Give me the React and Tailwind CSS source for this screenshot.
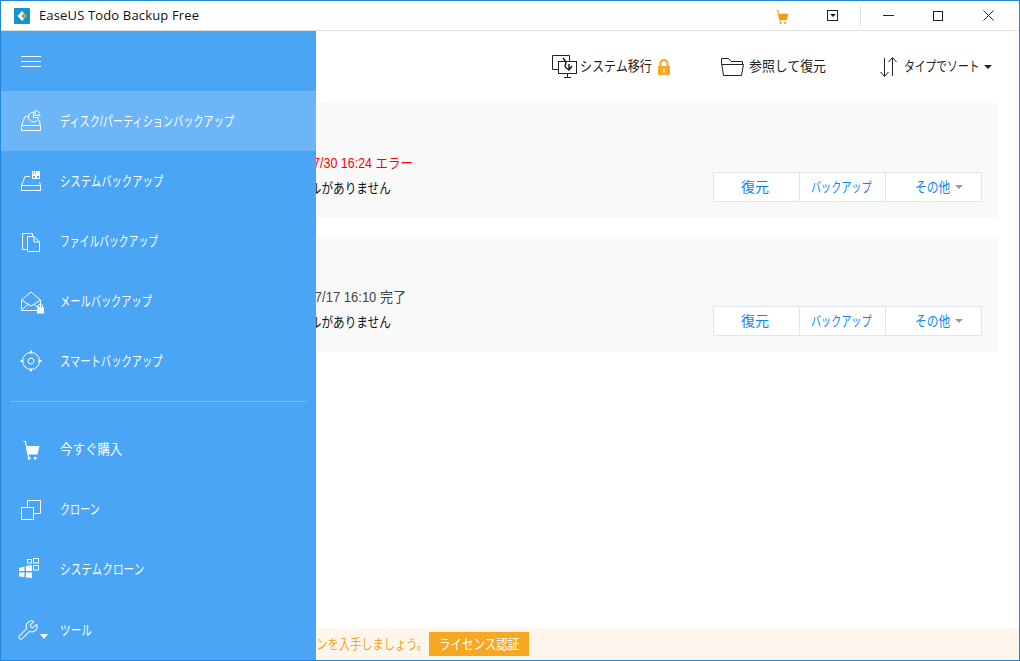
import { Wrench } from "lucide-react";

// narrow the Japanese text, the reference font is much more condensed than Noto
function Txt({ box, squeeze, children }) {
  return (
    <span className={`inline-block whitespace-nowrap ${box}`}>
      <span className={`inline-block origin-left ${squeeze}`}>{children}</span>
    </span>
  );
}

function DiskIcon() {
  return (
    <svg width="24" height="24" viewBox="0 0 24 24" fill="none" stroke="white" strokeWidth="1">
      <rect x="2.5" y="16.5" width="19" height="5" />
      <path d="M2.5 16.5 L6 7.5 H10 M21.5 16.5 L20 11" />
      <path d="M14.5 3 A5 5 0 1 0 19.5 8.5 H14.5 Z" />
      <path d="M16 1.5 A5 5 0 0 1 21 6.5 H16 Z" />
    </svg>
  );
}

function SystemIcon() {
  return (
    <svg width="24" height="24" viewBox="0 0 24 24" fill="none" stroke="white" strokeWidth="1">
      <rect x="2.5" y="16.5" width="19" height="5" />
      <path d="M2.5 16.5 L6 7.5 H11 M21.5 16.5 L20.5 13" />
      <rect x="17" y="2.5" width="3.5" height="3" fill="white" />
      <rect x="13.5" y="6.5" width="3" height="3" />
      <rect x="17.5" y="6.5" width="3" height="3" />
      <rect x="13.5" y="2.5" width="2" height="3" />
    </svg>
  );
}

function FileIcon() {
  return (
    <svg width="24" height="24" viewBox="0 0 24 24" fill="none" stroke="white" strokeWidth="1">
      <path d="M8.5 20.5 H3.5 V4.5 H13.5 V7.5" />
      <path d="M8.5 7.5 H15 L20.5 13 V22.5 H8.5 Z M15 7.5 V13 H20.5" />
    </svg>
  );
}

function MailIcon() {
  return (
    <svg width="24" height="24" viewBox="0 0 24 24" fill="none" stroke="white" strokeWidth="1" className="overflow-visible">
      <path d="M2.5 11 L12 3 L21.5 11 V21.5 H2.5 Z" />
      <path d="M2.5 11 L12 17 L21.5 11 M2.5 21 L9 15.5 M21 19 L15 15.5" />
      <rect x="18" y="18.5" width="7" height="6" fill="white" stroke="none" />
      <path d="M19.5 18.5 V17 A2 2 0 0 1 23.5 17 V18.5" />
    </svg>
  );
}

function SmartIcon() {
  return (
    <svg width="24" height="24" viewBox="0 0 24 24" fill="none" stroke="white" strokeWidth="1">
      <circle cx="12" cy="12" r="8.5" />
      <circle cx="12" cy="12" r="3" />
      <path d="M12 1.5 V4.5 M12 19.5 V22.5 M1.5 12 H4.5 M19.5 12 H22.5" strokeWidth="2" />
    </svg>
  );
}

function CartIcon({ color, size = 24 }) {
  return (
    <svg width={size} height={size} viewBox="0 0 24 24" fill={color} stroke="none">
      <path d="M3 4 L6 5 L9 20 H10 L7 4 Z" />
      <path d="M7 9 H20.5 L18.5 17.5 H8.5 Z" />
      <rect x="9" y="20" width="2.5" height="2.5" />
      <rect x="15" y="20" width="2.5" height="2.5" />
    </svg>
  );
}

function CloneIcon() {
  return (
    <svg width="24" height="24" viewBox="0 0 24 24" fill="none" stroke="white" strokeWidth="1">
      <rect x="2.5" y="10.5" width="12" height="12" />
      <path d="M8.5 10 V3.5 H21.5 V16.5 H15" />
    </svg>
  );
}

function SysCloneIcon() {
  return (
    <svg width="24" height="24" viewBox="0 0 24 24" fill="white" stroke="none">
      <path d="M0 11 L5.5 9.5 V14 H0 Z M7 9 L13 8 V14 H7 Z M0 15.5 H5.5 V20 L0 19.5 Z M7 15.5 H13 V21 L7 20.5 Z" />
      <g fill="none" stroke="white" strokeWidth="1">
        <rect x="8.5" y="2.5" width="4" height="3.5" />
        <rect x="14.5" y="1.5" width="5" height="4.5" />
        <rect x="14.5" y="8.5" width="5" height="4.5" />
      </g>
    </svg>
  );
}

const menu = [
  { icon: <DiskIcon />, label: "ディスク/パーティションバックアップ", box: "w-[175px]", squeeze: "scale-x-[0.725]", active: true },
  { icon: <SystemIcon />, label: "システムバックアップ", box: "w-[104px]", squeeze: "scale-x-[0.74]" },
  { icon: <FileIcon />, label: "ファイルバックアップ", box: "w-[98px]", squeeze: "scale-x-[0.7]" },
  { icon: <MailIcon />, label: "メールバックアップ", box: "w-[92px]", squeeze: "scale-x-[0.73]" },
  { icon: <SmartIcon />, label: "スマートバックアップ", box: "w-[103px]", squeeze: "scale-x-[0.735]" },
];

const menu2 = [
  { icon: <CartIcon color="white" />, label: "今すぐ購入", box: "w-[62px]", squeeze: "scale-x-[0.89]" },
  { icon: <CloneIcon />, label: "クローン", box: "w-[40px]", squeeze: "scale-x-[0.72]" },
  { icon: <SysCloneIcon />, label: "システムクローン", box: "w-[85px]", squeeze: "scale-x-[0.76]" },
];

function SideRow({ item }) {
  return (
    <div className={`flex h-[60px] items-center pl-[18px] text-white ${item.active ? "bg-[#6cb5f7]" : ""}`}>
      <div className="w-[24px] shrink-0">{item.icon}</div>
      <div className="ml-[17px] pt-px">
        <Txt box={item.box} squeeze={item.squeeze}>{item.label}</Txt>
      </div>
    </div>
  );
}

function Sidebar() {
  return (
    <aside className="absolute inset-y-0 left-0 z-10 flex w-[315px] flex-col bg-[#4aa5f5]">
      <div className="flex h-[60px] shrink-0 flex-col justify-center gap-[4px] pl-[20px]">
        <div className="h-px w-[20px] bg-white" />
        <div className="h-px w-[20px] bg-white" />
        <div className="h-px w-[20px] bg-white" />
      </div>
      {menu.map((m) => (
        <SideRow key={m.label} item={m} />
      ))}
      <div className="mx-[10px] mt-[10px] mb-[17px] h-px bg-[#7dbdf8]" />
      {menu2.map((m) => (
        <SideRow key={m.label} item={m} />
      ))}
      <div className="flex h-[60px] items-center pt-[2px] pl-[16px] text-white">
        <div className="flex w-[32px] shrink-0 items-end">
          <Wrench size={22} strokeWidth={1.25} className="shrink-0 text-[#e3f1fe]" />
          <div className="mb-[2px] ml-[1px] h-0 w-0 border-x-[4px] border-t-[5px] border-x-transparent border-t-white" />
        </div>
        <div className="ml-[11px] pt-px">
          <Txt box="w-[32px]" squeeze="scale-x-[0.76]">ツール</Txt>
        </div>
      </div>
    </aside>
  );
}

function TitleBar() {
  return (
    <header className="flex h-[30px] shrink-0 items-center border-b border-[#dcdfe3] pl-[13px]">
      <svg width="16" height="16" viewBox="0 0 16 16">
        <rect width="16" height="16" rx="1" fill="#1295c9" />
        <path d="M8 3 L3.5 8 L8 13 L10 11 L7.5 8 L10 5 Z" fill="white" />
        <path d="M10 5 L12.5 8 L10 11 L8.5 9.5 L9.8 8 L8.5 6.5 Z" fill="#f5a623" />
      </svg>
      <span className="ml-[9px] font-['Open_Sans',sans-serif] text-[13px] tracking-[0.15px] text-[#111]">EaseUS Todo Backup Free</span>
      <div className="ml-auto flex items-center">
        <CartIcon color="#f09d0e" size={18} />
        <div className="ml-[36px] flex h-[11px] w-[11px] items-center justify-center border border-[#222]">
          <div className="h-0 w-0 border-x-[3px] border-t-[3px] border-x-transparent border-t-[#222]" />
        </div>
        <div className="ml-[22px] h-[20px] w-px bg-[#dcdfe3]" />
        <div className="ml-[22px] h-px w-[11px] bg-[#222]" />
        <div className="ml-[39px] h-[10px] w-[10px] border border-[#222]" />
        <svg width="11" height="11" viewBox="0 0 11 11" className="mr-[25px] ml-[40px]" stroke="#222" strokeWidth="1">
          <path d="M0.5 0.5 L10.5 10.5 M10.5 0.5 L0.5 10.5" />
        </svg>
      </div>
    </header>
  );
}

function Toolbar() {
  return (
    <div className="flex h-[72px] shrink-0 items-center justify-end pr-[27px] pb-[1px] text-[#222]">
      <svg width="25" height="23" viewBox="0 0 25 23" fill="none" stroke="#222" strokeWidth="1" className="mr-[3px]">
        <path d="M6 14.5 H0.5 V0.5 H17.5 V6" />
        <rect x="6.5" y="6.5" width="18" height="12" fill="white" />
        <path d="M12 22.5 H19 M15.5 18.5 V22.5" />
        <path d="M11 3 L14 7 L13 12 M17 9 V14 M13 12 L17 15 L20 11" strokeWidth="1.5" />
      </svg>
      <Txt box="w-[72px]" squeeze="scale-x-[0.86]">システム移行</Txt>
      <svg width="14" height="16" viewBox="0 0 14 16" className="ml-[5px]">
        <path d="M3.5 7 V4.5 A3.5 3.5 0 0 1 10.5 4.5 V7" fill="none" stroke="#f5a623" strokeWidth="2" />
        <rect x="1" y="7" width="12" height="9" fill="#f5a623" />
        <rect x="6" y="9.5" width="2" height="4" fill="#fde3b5" />
      </svg>
      <svg width="23" height="20" viewBox="0 0 23 20" fill="none" stroke="#222" strokeWidth="1" className="mr-[5px] ml-[50px]">
        <path d="M2.5 18.5 L0.5 6 V1.5 H7.5 L10 4.5 H21.5 V8" />
        <path d="M0.5 7.5 H22.5 L20.5 18.5 H2.5" />
      </svg>
      <Txt box="w-[76px]" squeeze="scale-x-[0.92]">参照して復元</Txt>
      <svg width="18" height="20" viewBox="0 0 18 20" fill="none" stroke="#222" strokeWidth="1" className="mr-[7px] ml-[54px]">
        <path d="M5.5 1 V19 M1.5 15 L5.5 19.5 L9.5 15" />
        <path d="M13.5 19 V1 M9.5 5 L13.5 0.5 L17.5 5" />
      </svg>
      <Txt box="w-[76px]" squeeze="scale-x-[0.77]">タイプでソート</Txt>
      <div className="ml-[4px] h-0 w-0 border-x-[4px] border-t-[4px] border-x-transparent border-t-[#222]" />
    </div>
  );
}

function CardButtons() {
  return (
    <div className="flex h-[30px] border border-[#e0e5ee] bg-white text-[#0a84f5]">
      <div className="flex w-[85px] items-center pl-[27px]">
        <Txt box="w-[30px]" squeeze="scale-x-[1]">復元</Txt>
      </div>
      <div className="flex w-[86px] items-center border-l border-[#e0e5ee] pl-[11px]">
        <Txt box="w-[60px]" squeeze="scale-x-[0.72]">バックアップ</Txt>
      </div>
      <div className="flex w-[96px] items-center border-l border-[#e0e5ee] pl-[29px]">
        <Txt box="w-[36px]" squeeze="scale-x-[0.84]">その他</Txt>
        <div className="ml-[4px] h-0 w-0 border-x-[4px] border-t-[4px] border-x-transparent border-t-[#999]" />
      </div>
    </div>
  );
}

function BackupCard({ status, statusClass, squeeze, mb }) {
  return (
    <div className={`flex h-[115px] items-end bg-[#f9f9f9] pr-[17px] pb-[16px] ${mb}`}>
      <div className="flex-1 pb-[1px] pl-[255px] leading-[25px]">
        <div className={statusClass}>
          <Txt box="w-[140px]" squeeze={squeeze}>{status}</Txt>
        </div>
        <div className="text-[#111]">
          <Txt box="w-[120px]" squeeze="scale-x-[0.83]">ファイルがありません</Txt>
        </div>
      </div>
      <CardButtons />
    </div>
  );
}

export default function App() {
  return (
    <div className="flex h-[661px] w-[1020px] flex-col overflow-hidden border border-[#2387d9] bg-white font-['Liberation_Sans','Noto_Sans_CJK_JP',sans-serif] text-[14px]">
      <TitleBar />
      <div className="relative flex min-h-0 flex-1 flex-col">
        <Sidebar />
        <Toolbar />
        <div className="flex-1 pr-[20px] pl-[19px]">
          <BackupCard status="2019/07/30 16:24 エラー" statusClass="text-[#ff0000]" squeeze="scale-x-[0.89]" mb="mb-[19px]" />
          <BackupCard status="2019/07/17 16:10 完了" statusClass="text-[#444]" squeeze="scale-x-[0.93]" />
        </div>
        <footer className="flex h-[32px] shrink-0 items-center bg-[#fef5ec] text-[#f5a623]">
          <div className="flex w-[427px] justify-end">
            <span className="inline-block origin-right scale-x-[0.8] whitespace-nowrap">フルバージョンを入手しましょう。</span>
          </div>
          <div className="ml-[1px] flex h-[24px] w-[100px] items-center bg-[#f7a823] pl-[10px] text-white">
            <Txt box="w-[80px]" squeeze="scale-x-[0.82]">ライセンス認証</Txt>
          </div>
        </footer>
      </div>
    </div>
  );
}
